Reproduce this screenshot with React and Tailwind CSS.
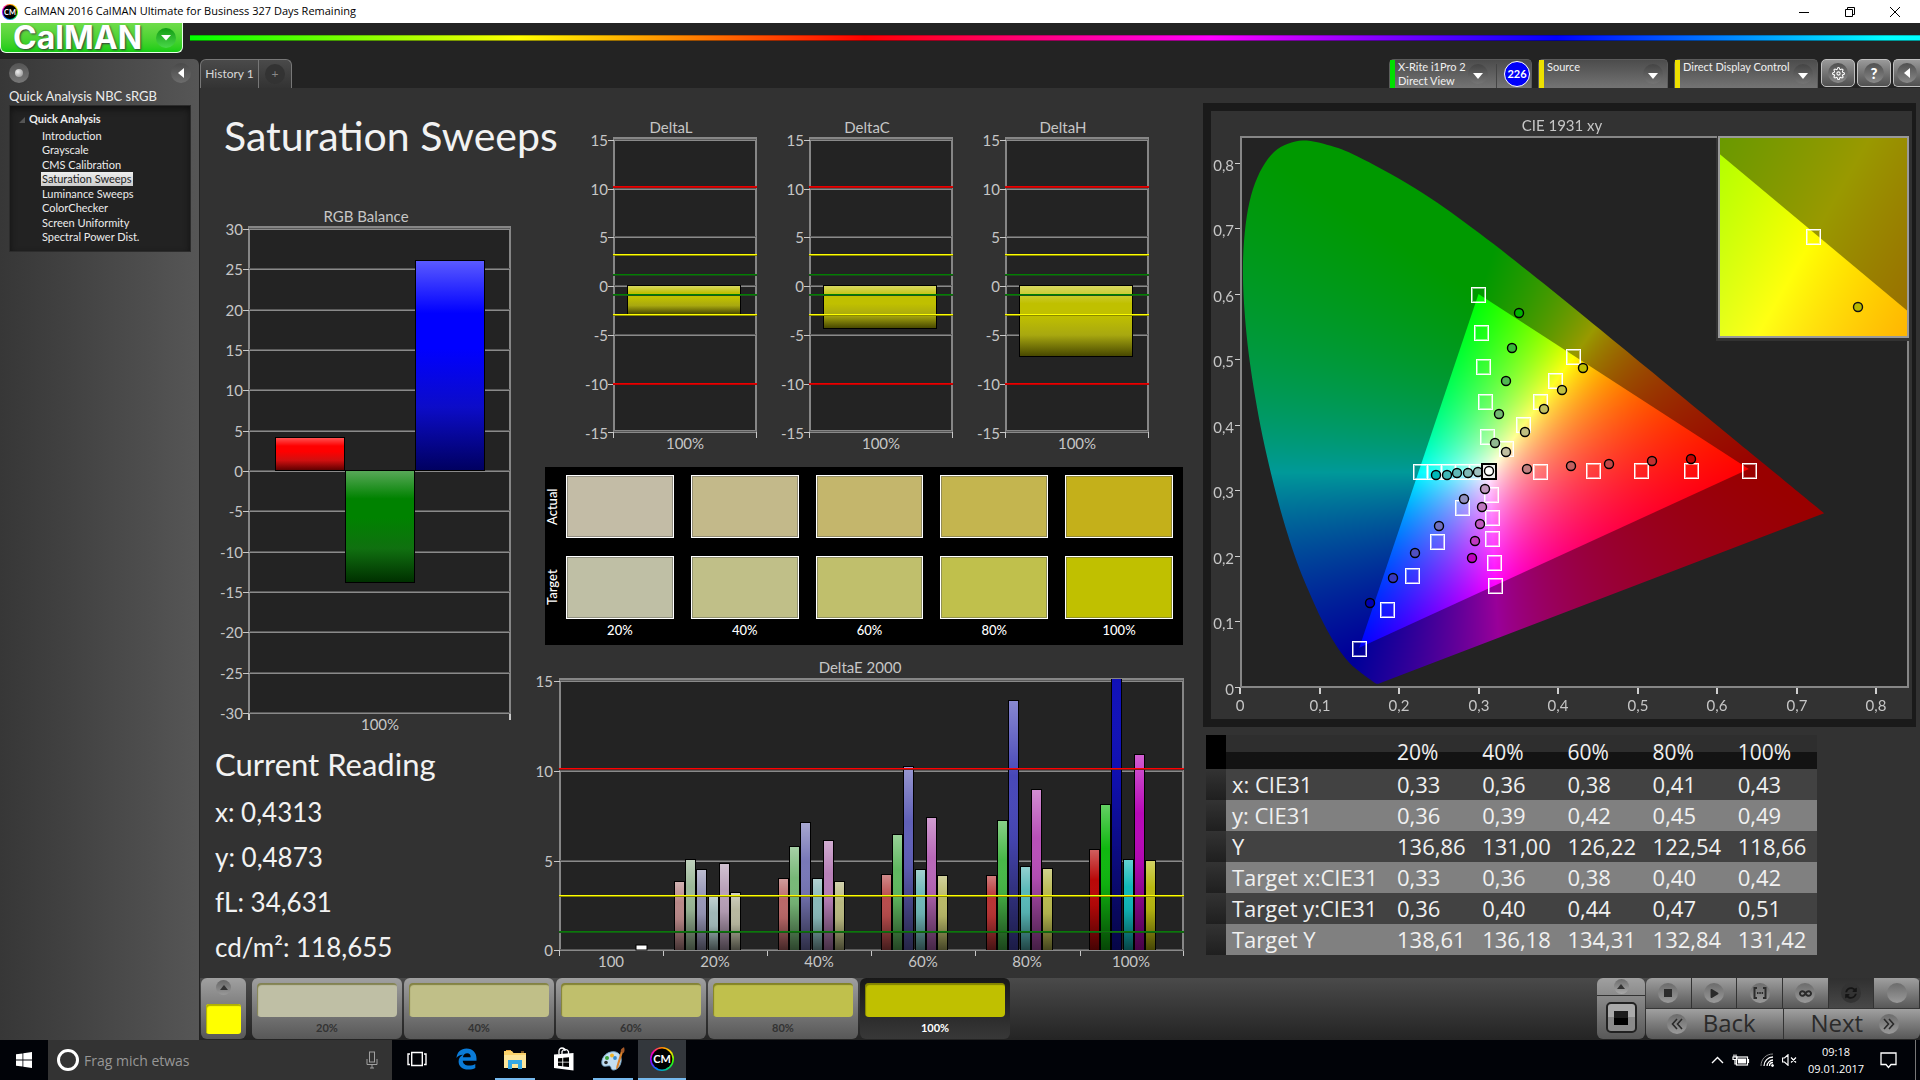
import React, { useLayoutEffect, useRef } from "react";
import {
  FaPlay,
  FaInfinity,
  FaSyncAlt,
} from "react-icons/fa";
import { FiSettings } from "react-icons/fi";

const LATO = "font-[Lato,'Open_Sans',sans-serif]";
const OPEN = "font-['Open_Sans','Noto_Sans',sans-serif]";

/* ---------- shared chart parts ---------- */

function BarFill({ id, color }) {
  return (
    <linearGradient id={id} x1="0" y1="0" x2="0" y2="1">
      <stop offset="0" stopColor={color.light} />
      <stop offset="0.25" stopColor={color.main} />
      <stop offset="0.42" stopColor={color.main} />
      <stop offset="0.7" stopColor={color.soft} />
      <stop offset="1" stopColor={color.dark} />
    </linearGradient>
  );
}

function Bar({ x, y, w, h, fill }) {
  return (
    <g shapeRendering="crispEdges">
      <rect x={x - 1} y={y - 1} width={w + 2} height={h + 2} fill="#000" />
      <rect x={x} y={y} width={w} height={h} fill={fill} />
    </g>
  );
}

function GridLine({ x1, x2, y }) {
  return (
    <g shapeRendering="crispEdges">
      <rect x={x1} y={y - 1} width={x2 - x1} height="1" fill="#5a5a5a" />
      <rect x={x1} y={y} width={x2 - x1} height="1" fill="#8a8a8a" />
      <rect x={x1 - 6} y={y} width="6" height="1" fill="#c8c8c8" />
    </g>
  );
}

function Level({ x1, x2, y, color, dim }) {
  return (
    <g shapeRendering="crispEdges">
      <rect x={x1} y={y - 1} width={x2 - x1} height="1" fill={color} />
      <rect x={x1} y={y} width={x2 - x1} height="1" fill={dim} />
    </g>
  );
}

const SVG_TEXT = "fill-[#c6c6c6] text-[15px]";

/* ---------- RGB balance ---------- */

const RGB_TICKS = [30, 25, 20, 15, 10, 5, 0, -5, -10, -15, -20, -25, -30];

function RgbBalance() {
  const yOf = (v) => Math.round(269 - v * 8.07);
  return (
    <svg viewBox="0 0 330 528" className={`block h-auto w-full ${LATO}`}>
      <defs>
        <BarFill id="rgbR" color={{ light: "#ff5050", main: "#ff0000", soft: "#d01010", dark: "#600000" }} />
        <BarFill id="rgbG" color={{ light: "#58a858", main: "#008200", soft: "#107010", dark: "#003000" }} />
        <BarFill id="rgbB" color={{ light: "#5a5aff", main: "#0000ff", soft: "#0c0cc8", dark: "#000060" }} />
      </defs>
      <text x="166" y="20" textAnchor="middle" className={SVG_TEXT}>RGB Balance</text>
      <rect x="49" y="25" width="261" height="486" fill="#232323" stroke="#868686" strokeWidth="2" />
      {RGB_TICKS.map((v) => (
        <g key={v}>
          <GridLine x1={49} x2={310} y={yOf(v)} />
          <text x="43" y={yOf(v) + 6} textAnchor="end" className={SVG_TEXT}>{v}</text>
        </g>
      ))}
      <Bar x={76} y={236} w={68} h={32} fill="url(#rgbR)" />
      <Bar x={146} y={269} w={68} h={111} fill="url(#rgbG)" />
      <Bar x={216} y={59} w={68} h={209} fill="url(#rgbB)" />
      <rect x="48" y="512" width="2" height="6" fill="#c8c8c8" />
      <rect x="309" y="512" width="2" height="6" fill="#c8c8c8" />
      <text x="180" y="528" textAnchor="middle" className={SVG_TEXT}>100%</text>
    </svg>
  );
}

/* ---------- DeltaL / C / H ---------- */

const DELTA_TICKS = [15, 10, 5, 0, -5, -10, -15];

function DeltaChart({ name, bottom }) {
  const yOf = (v) => Math.round(174 - v * 9.75);
  return (
    <svg viewBox="0 0 196 350" className={`block h-auto w-full ${LATO}`}>
      <defs>
        <BarFill id={name} color={{ light: "#d8d860", main: "#c0c000", soft: "#a8a810", dark: "#484800" }} />
      </defs>
      <text x="96" y="21" textAnchor="middle" className={SVG_TEXT}>{name}</text>
      <rect x="39" y="26" width="142" height="293" fill="#232323" stroke="#868686" strokeWidth="2" />
      {DELTA_TICKS.map((v) => (
        <g key={v}>
          <GridLine x1={39} x2={181} y={yOf(v)} />
          <text x="33" y={yOf(v) + (v < -10 ? 7 : 6)} textAnchor="end" className={SVG_TEXT}>{v}</text>
        </g>
      ))}
      <Bar x={53} y={174} w={112} h={bottom - 174} fill={`url(#${name})`} />
      <Level x1={38} x2={182} y={75} color="#e80000" dim="#c00000" />
      <Level x1={38} x2={182} y={143} color="#ffff00" dim="#8a8a00" />
      <Level x1={38} x2={182} y={163} color="#008000" dim="#1d481d" />
      <Level x1={38} x2={182} y={183} color="#008000" dim="#1d581d" />
      <Level x1={38} x2={182} y={203} color="#ffff00" dim="#8a8a00" />
      <Level x1={38} x2={182} y={272} color="#e80000" dim="#c00000" />
      <rect x="38" y="320" width="1" height="6" fill="#c8c8c8" />
      <rect x="181" y="320" width="1" height="6" fill="#c8c8c8" />
      <text x="110" y="337" textAnchor="middle" className={SVG_TEXT}>100%</text>
    </svg>
  );
}

/* ---------- actual / target patches ---------- */

const PATCHES = [
  ["20%", "bg-[#c3bca6]", "bg-[#bfbfa5]"],
  ["40%", "bg-[#c3b98a]", "bg-[#c0bf88]"],
  ["60%", "bg-[#c4b66c]", "bg-[#c0bf6c]"],
  ["80%", "bg-[#c4b54f]", "bg-[#c0c04c]"],
  ["100%", "bg-[#c4b01a]", "bg-[#c0c000]"],
];

function PatchPanel() {
  return (
    <div className={`ml-[15px] mr-[17px] mt-[5px] flex h-[178px] bg-black pt-2 pr-2.5 text-[13px] font-medium text-white ${LATO}`}>
      <div className="flex w-[21px] flex-col gap-[18px]">
        <span className="flex h-[63px] w-4 rotate-180 items-center justify-center [writing-mode:vertical-rl]">Actual</span>
        <span className="flex h-[63px] w-4 rotate-180 items-center justify-center [writing-mode:vertical-rl]">Target</span>
      </div>
      <div className="grid flex-1 grid-cols-5 gap-x-[17px]">
        {PATCHES.map(([label, actual, target]) => (
          <div key={label} className="flex flex-col">
            <div className={`h-[63px] border border-white shadow-[inset_0_0_0_1px_rgba(90,90,90,0.45)] ${actual}`} />
            <div className={`mt-[18px] h-[63px] border border-white shadow-[inset_0_0_0_1px_rgba(90,90,90,0.45)] ${target}`} />
            <span className="mt-0.5 text-center leading-[18px]">{label}</span>
          </div>
        ))}
      </div>
    </div>
  );
}

/* ---------- DeltaE 2000 ---------- */

const DE_SERIES = [
  { label: "20%", x: 144, tops: [231, 209, 219, 246, 213, 242], colors: ["#b88888", "#9cb898", "#9898b8", "#a0b8b8", "#b8a0b8", "#b8b8a0"] },
  { label: "40%", x: 248, tops: [228, 196, 172, 228, 190, 231], colors: ["#b86868", "#78b878", "#7878b8", "#88b8b8", "#b880b8", "#b8b880"] },
  { label: "60%", x: 351, tops: [224, 184, 116, 219, 167, 225], colors: ["#b84c4c", "#60b860", "#6060b8", "#70b8b8", "#b868b8", "#b8b868"] },
  { label: "80%", x: 456, tops: [225, 170, 50, 216, 139, 218], colors: ["#b83434", "#48b848", "#4848b8", "#58b8b8", "#b850b8", "#b8b850"] },
  { label: "100%", x: 559, tops: [199, 154, -90, 209, 104, 210], colors: ["#b80808", "#10b810", "#1010b8", "#10b8b8", "#b808b8", "#b8b810"] },
];

function DeltaE() {
  return (
    <svg viewBox="0 0 670 325" className={`mt-[5px] block h-auto w-full ${LATO}`}>
      <defs>
        <linearGradient id="gloss" x1="0" y1="0" x2="0" y2="1">
          <stop offset="0" stopColor="#fff" stopOpacity="0.35" />
          <stop offset="0.3" stopColor="#fff" stopOpacity="0" />
          <stop offset="0.55" stopColor="#000" stopOpacity="0.05" />
          <stop offset="1" stopColor="#000" stopOpacity="0.62" />
        </linearGradient>
        <clipPath id="dePlot">
          <rect x="29" y="29" width="625" height="272" />
        </clipPath>
      </defs>
      <text x="330" y="23" textAnchor="middle" className={SVG_TEXT}>DeltaE 2000</text>
      <rect x="30" y="29" width="623" height="271" fill="#232323" stroke="#868686" strokeWidth="2" />
      {[[15, 31], [10, 121], [5, 211], [0, 300]].map(([v, y]) => (
        <g key={v}>
          <GridLine x1={30} x2={653} y={y} />
          <text x="23" y={y + 6} textAnchor="end" className={SVG_TEXT}>{v}</text>
        </g>
      ))}
      <rect x="106" y="295" width="11" height="5" fill="#fff" stroke="#000" />
      <g clipPath="url(#dePlot)">
        {DE_SERIES.map((s) =>
          s.tops.map((top, i) => (
            <g key={s.label + i} shapeRendering="crispEdges">
              <rect x={s.x + Math.round(i * 11.2)} y={top} width="11" height={300 - top} fill="#000" />
              <rect x={s.x + Math.round(i * 11.2) + 1} y={top + 1} width="9" height={299 - top} fill={s.colors[i]} />
              <rect x={s.x + Math.round(i * 11.2) + 1} y={top + 1} width="9" height={299 - top} fill="url(#gloss)" />
            </g>
          ))
        )}
      </g>
      <Level x1={29} x2={654} y={119} color="#ff0000" dim="#801818" />
      <Level x1={29} x2={654} y={246} color="#ffff00" dim="#8a8a00" />
      <Level x1={29} x2={654} y={282} color="#0a780a" dim="#145c14" />
      {[29, 133, 237, 341, 445, 550, 653].map((x) => (
        <rect key={x} x={x} y="301" width="1" height="5" fill="#c8c8c8" />
      ))}
      {["100", "20%", "40%", "60%", "80%", "100%"].map((t, i) => (
        <text key={t} x={81 + i * 104} y="317" textAnchor="middle" className={SVG_TEXT}>{t}</text>
      ))}
    </svg>
  );
}

/* ---------- CIE 1931 diagram ---------- */

const LOCUS = [
  [0.1741, 0.005], [0.1714, 0.0051], [0.1689, 0.0069], [0.1644, 0.0109], [0.1566, 0.0177], [0.144, 0.0297],
  [0.1355, 0.0399], [0.1241, 0.0578], [0.1096, 0.0868], [0.0913, 0.1327], [0.0687, 0.2007], [0.0454, 0.295],
  [0.0235, 0.4127], [0.0082, 0.5384], [0.0039, 0.6548], [0.0139, 0.7502], [0.0389, 0.812], [0.0743, 0.8338],
  [0.1142, 0.8262], [0.1547, 0.8059], [0.2296, 0.7543], [0.3016, 0.6923], [0.3731, 0.6245], [0.4441, 0.5547],
  [0.5125, 0.4866], [0.5752, 0.4242], [0.627, 0.3725], [0.6658, 0.334], [0.6915, 0.3083], [0.719, 0.2809],
  [0.7347, 0.2653],
];
const GAMUT = [[0.64, 0.333], [0.3, 0.6], [0.15, 0.06]];

function smooth(points) {
  const out = [];
  for (let i = 0; i < points.length - 1; i++) {
    const p0 = points[Math.max(0, i - 1)];
    const p1 = points[i];
    const p2 = points[i + 1];
    const p3 = points[Math.min(points.length - 1, i + 2)];
    for (let s = 0; s < 8; s++) {
      const t = s / 8;
      out.push([0, 1].map((k) =>
        0.5 * (2 * p1[k] + (p2[k] - p0[k]) * t + (2 * p0[k] - 5 * p1[k] + 4 * p2[k] - p3[k]) * t * t +
          (3 * p1[k] - p0[k] - 3 * p2[k] + p3[k]) * t * t * t)
      ));
    }
  }
  out.push(points[points.length - 1]);
  return out;
}

function colorAt(x, y) {
  const yy = Math.max(y, 0.001);
  const X = x / yy;
  const Z = (1 - x - yy) / yy;
  const r = Math.max(0, 3.2406 * X - 1.5372 - 0.4986 * Z);
  const g = Math.max(0, -0.9689 * X + 1.8758 + 0.0415 * Z);
  const b = Math.max(0, 0.0557 * X - 0.204 + 1.057 * Z);
  const m = Math.max(r, g, b, 0.0001);
  return [(r / m) * 255, (g / m) * 255, (b / m) * 255];
}

function paintField(ctx, box, toXY, toPx, outline) {
  const layer = (gain) => {
    const c = document.createElement("canvas");
    c.width = box.w;
    c.height = box.h;
    const cx = c.getContext("2d");
    const img = cx.createImageData(box.w, box.h);
    for (let j = 0; j < box.h; j++) {
      for (let i = 0; i < box.w; i++) {
        const [x, y] = toXY(i, j);
        const rgb = colorAt(x, y);
        const o = (j * box.w + i) * 4;
        img.data[o] = rgb[0] * gain;
        img.data[o + 1] = rgb[1] * gain;
        img.data[o + 2] = rgb[2] * gain;
        img.data[o + 3] = 255;
      }
    }
    cx.putImageData(img, 0, 0);
    return c;
  };
  const clipTo = (pts) => {
    ctx.beginPath();
    pts.forEach((p, i) => {
      const [px, py] = toPx(p[0], p[1]);
      if (i) ctx.lineTo(box.x + px, box.y + py);
      else ctx.moveTo(box.x + px, box.y + py);
    });
    ctx.closePath();
    ctx.clip();
  };
  ctx.save();
  ctx.beginPath();
  ctx.rect(box.x, box.y, box.w, box.h);
  ctx.clip();
  ctx.save();
  if (outline) clipTo(outline);
  ctx.drawImage(layer(0.6), box.x, box.y);
  ctx.restore();
  clipTo(GAMUT);
  ctx.drawImage(layer(1), box.x, box.y);
  ctx.restore();
}

const TARGETS = [
  [509, 334], [451, 334], [401, 334], [353, 334], [300, 335],
  [238, 158], [241, 196], [243, 230], [245, 265], [247, 300],
  [333, 220], [315, 244], [300, 265], [283, 288], [266, 312],
  [180, 335], [194, 335], [208, 335], [222, 335], [236, 335],
  [251, 358], [252, 381], [252, 402], [254, 426], [255, 449],
  [222, 371], [197, 405], [172, 439], [147, 473], [119, 512],
];
const READINGS = [
  [287, 333, "#c08080"], [331, 330, "#c06060"], [369, 328, "#c04848"], [412, 325, "#c03030"], [451, 323, "#c00000"],
  [255, 307, "#90b890"], [259, 278, "#70b870"], [266, 245, "#50b850"], [272, 212, "#38b838"], [279, 177, "#00b400"],
  [266, 316, "#c0bfa0"], [285, 296, "#c0bf80"], [304, 273, "#c0bf60"], [322, 254, "#c0c040"], [343, 232, "#c0c000"],
  [238, 336, "#a0c0c0"], [228, 337, "#80b8b8"], [217, 337, "#60b8b8"], [207, 339, "#40b8b8"], [196, 339, "#00b8b8"],
  [245, 353, "#c098c0"], [242, 371, "#c078c0"], [240, 388, "#c058c0"], [235, 405, "#c038c0"], [232, 422, "#c000c0"],
  [224, 363, "#9090c0"], [199, 390, "#7070c0"], [175, 417, "#5050c0"], [153, 442, "#3838c0"], [130, 467, "#0000b0"],
];

function TargetBox({ x, y }) {
  return (
    <g fill="none" shapeRendering="crispEdges">
      <rect x={x - 7} y={y - 7} width="14" height="15" stroke="#fff" />
      <rect x={x - 6} y={y - 6} width="12" height="13" stroke="#fff" strokeOpacity="0.5" />
    </g>
  );
}

function CieChart() {
  const ref = useRef(null);
  useLayoutEffect(() => {
    const ctx = ref.current.getContext("2d");
    ctx.clearRect(0, 0, 701, 608);
    ctx.fillStyle = "#232323";
    ctx.fillRect(29, 25, 668, 551);
    paintField(
      ctx,
      { x: 29, y: 25, w: 668, h: 551 },
      (i, j) => [i / 795, (551 - j) / 655],
      (x, y) => [x * 795, 551 - y * 655],
      smooth(LOCUS)
    );
    ctx.fillStyle = "#323232";
    ctx.fillRect(505, 22, 194, 208);
    paintField(
      ctx,
      { x: 508, y: 26, w: 188, h: 200 },
      (i, j) => [0.4193 + (i - 94) / 3700, 0.5053 - (j - 99) / 3930],
      (x, y) => [94 + (x - 0.4193) * 3700, 99 - (y - 0.5053) * 3930],
      null
    );
  }, []);
  return (
    <section className="mr-1 ml-[3px] mt-[15px] border-8 border-r-4 border-[#1a1a1a] bg-[#323232]">
      <div className="relative">
        <canvas ref={ref} width="701" height="608" className="block h-auto w-full" />
        <svg viewBox="0 0 701 608" className={`absolute inset-0 h-full w-full ${LATO}`}>
          <text x="351" y="20" textAnchor="middle" className={SVG_TEXT}>CIE 1931 xy</text>
          <path d="M506 26H30V576H697V230" fill="none" stroke="#868686" strokeWidth="2" />
          {[0, 1, 2, 3, 4, 5, 6, 7, 8].map((n) => {
            const label = n ? `0,${n}` : "0";
            return (
              <g key={n}>
                <rect x={28 + Math.round(n * 79.5)} y="577" width="2" height="6" fill="#d0d0d0" />
                <text x={29 + Math.round(n * 79.5)} y="600" textAnchor="middle" className={SVG_TEXT}>{label}</text>
                <rect x="24" y={576 - Math.round(n * 65.5)} width="5" height="1" fill="#d0d0d0" />
                <text x="23" y={584 - Math.round(n * 65.5)} textAnchor="end" className={SVG_TEXT}>{label}</text>
              </g>
            );
          })}
          <g transform="translate(29 25)">
            {TARGETS.map(([x, y]) => (
              <TargetBox key={`${x}-${y}`} x={x} y={y} />
            ))}
            {READINGS.map(([x, y, c]) => (
              <circle key={`${x}-${y}`} cx={x} cy={y} r="4.5" fill={c} stroke="#000" strokeWidth="1.4" />
            ))}
            <rect x="242" y="328" width="14" height="15" fill="#f0f0f0" stroke="#000" strokeWidth="2" />
            <circle cx="249" cy="335" r="4.5" fill="#fff" stroke="#000" strokeWidth="1.4" />
          </g>
          <rect x="508" y="26" width="189" height="200" fill="none" stroke="#999" strokeWidth="2" />
          <TargetBox x={602} y={125} />
          <circle cx="647" cy="196" r="4.5" fill="#b8b800" stroke="#111" strokeWidth="1.4" />
        </svg>
      </div>
    </section>
  );
}

/* ---------- readings table ---------- */

const COLS = ["20%", "40%", "60%", "80%", "100%"];
const ROWS = [
  ["x: CIE31", "0,33", "0,36", "0,38", "0,41", "0,43"],
  ["y: CIE31", "0,36", "0,39", "0,42", "0,45", "0,49"],
  ["Y", "136,86", "131,00", "126,22", "122,54", "118,66"],
  ["Target x:CIE31", "0,33", "0,36", "0,38", "0,40", "0,42"],
  ["Target y:CIE31", "0,36", "0,40", "0,44", "0,47", "0,51"],
  ["Target Y", "138,61", "136,18", "134,31", "132,84", "131,42"],
];

function ReadingsTable() {
  return (
    <table className={`mt-2 ml-1.5 w-[611px] table-fixed border-collapse text-left text-[22px] leading-[28px] text-[#f0f0f0] ${OPEN}`}>
      <colgroup>
        <col className="w-5" />
        <col className="w-[165px]" />
      </colgroup>
      <thead>
        <tr className="h-[34px] bg-linear-to-b from-[#2e2e2e] from-50% to-[#131313] to-50%">
          <th className="bg-black" />
          <th />
          {COLS.map((c) => (
            <th key={c} scope="col" className="pl-1.5 text-[21px] font-normal">{c}</th>
          ))}
        </tr>
      </thead>
      <tbody>
        {ROWS.map(([name, ...vals]) => (
          <tr key={name} className="h-[31px] odd:bg-[#424242] even:bg-[#808080]">
            <td className="bg-linear-to-b from-[#333] to-[#1f1f1f]" />
            <th scope="row" className="pb-0.5 pl-1.5 font-normal whitespace-nowrap">{name}</th>
            {vals.map((v, i) => (
              <td key={i} className="pb-0.5 pl-1.5">{v}</td>
            ))}
          </tr>
        ))}
      </tbody>
    </table>
  );
}

/* ---------- header ---------- */

function CmIcon({ className }) {
  return (
    <span className={`flex items-center justify-center rounded-full bg-[conic-gradient(#f80,#fd0,#3f0,#0c8,#08f,#80f,#f0a,#f80)] ${className}`}>
      <svg viewBox="0 0 24 24" className="h-full w-full font-[Lato,sans-serif]">
        <circle cx="12" cy="12" r="10.4" fill="#000" />
        <text x="12" y="16" textAnchor="middle" fontSize="11" fontWeight="700" fill="#fff">CM</text>
      </svg>
    </span>
  );
}

function TitleBar() {
  return (
    <div className={`flex h-[23px] items-center bg-white pr-0.5 pl-0.5 text-black ${OPEN}`}>
      <CmIcon className="size-4" />
      <span className="ml-1.5 text-[11px]">CalMAN 2016 CalMAN Ultimate for Business 327 Days Remaining</span>
      <div className="ml-auto flex">
        <button aria-label="Minimize" className="flex h-[23px] w-[46px] items-center justify-center">
          <svg width="10" height="10" viewBox="0 0 10 10"><path d="M0 5.5h10" stroke="#000" /></svg>
        </button>
        <button aria-label="Restore" className="flex h-[23px] w-[45px] items-center justify-center">
          <svg width="10" height="10" viewBox="0 0 10 10" fill="none" stroke="#000"><path d="M.5 2.5h7v7h-7zM2.5 2.5v-2h7v7h-2" /></svg>
        </button>
        <button aria-label="Close" className="flex h-[23px] w-[46px] items-center justify-center">
          <svg width="10" height="10" viewBox="0 0 10 10"><path d="M0 0l10 10M10 0L0 10" stroke="#000" /></svg>
        </button>
      </div>
    </div>
  );
}

function BrandBar() {
  return (
    <div className="flex h-9 items-start bg-[#232323]">
      <button className="flex h-[30px] w-[183px] items-center rounded-b-md border border-t-0 border-[#e8ffe8] bg-linear-to-b from-[#6fdc4a] to-[#12cc12] pl-3 text-white">
        <span className="font-[Inter,Lato,sans-serif] text-[32px] leading-[28px] font-bold [text-shadow:1px_1px_2px_#3a3a3a]">CalMAN</span>
        <span className="mr-1.5 ml-auto flex size-5 shrink-0 items-center justify-center rounded-full bg-linear-to-b from-[#0c9c10] to-[#48d848]">
          <svg width="10" height="6" viewBox="0 0 10 6"><path d="M0 0h10L5 5.5z" fill="#fff" /></svg>
        </span>
      </button>
      <div className="mt-3 ml-[7px] h-1.5 flex-1 bg-[linear-gradient(90deg,#0f0_0%,#ff0_19%,#f00_39%,#f0f_59%,#00f_79%,#0ff_98%)] shadow-[inset_0_-1px_0_rgba(0,0,0,0.4),inset_0_1px_0_rgba(0,0,0,0.25)]" />
    </div>
  );
}

/* ---------- sidebar ---------- */

const TREE = ["Introduction", "Grayscale", "CMS Calibration", "Saturation Sweeps", "Luminance Sweeps", "ColorChecker", "Screen Uniformity", "Spectral Power Dist."];

function Sidebar() {
  return (
    <nav className={`flex w-[200px] shrink-0 flex-col rounded-tr-md border-r border-[#222] bg-linear-to-r from-[#373737] to-[#565656] text-[#ececec] ${LATO}`}>
      <div className="flex h-7 items-center justify-between pr-2 pl-[9px]">
        <button aria-label="Record" className="flex size-5 items-center justify-center rounded-full bg-linear-to-b from-[#555] to-[#777]">
          <span className="size-2 rounded-full bg-[radial-gradient(circle_at_35%_35%,#eee,#888)]" />
        </button>
        <button aria-label="Collapse panel" className="flex size-5 items-center justify-center rounded-full bg-linear-to-b from-[#4a4a4a] to-[#6c6c6c]">
          <svg width="6" height="10" viewBox="0 0 6 10"><path d="M6 0v10L0 5z" fill="#fff" /></svg>
        </button>
      </div>
      <h2 className="h-[18px] pl-[9px] text-[13px] leading-[19px] whitespace-nowrap">Quick Analysis NBC sRGB</h2>
      <div className="mr-2 ml-[9px] h-[147px] border border-[#2c2c2c] bg-[#222] pt-[5px] shadow-[inset_0_3px_6px_#111]">
        <div className="flex h-[17px] items-center pl-[9px] text-[11px] font-bold">
          <svg width="6" height="6" viewBox="0 0 6 6" className="mr-1"><path d="M6 0v6H0z" fill="#555" /></svg>
          Quick Analysis
        </div>
        <ul className="text-[11px]">
          {TREE.map((t) => (
            <li key={t} className="flex h-[15px] items-center pl-8 nth-[2n]:h-[14px]">
              <a
                href="#view"
                className={t === "Saturation Sweeps" ? "-ml-px bg-linear-to-b from-[#eee] to-[#ccc] px-px leading-[14px] text-[#222]" : "leading-[14px]"}
              >
                {t}
              </a>
            </li>
          ))}
        </ul>
      </div>
    </nav>
  );
}

/* ---------- tab row ---------- */

function DownKnob() {
  return (
    <span className="flex size-5 shrink-0 items-center justify-center rounded-full bg-linear-to-b from-[#444] to-[#757575]">
      <svg width="10" height="6" viewBox="0 0 10 6" className="mt-1"><path d="M0 0h10L5 6z" fill="#fff" /></svg>
    </span>
  );
}

const METER = "flex h-[29px] rounded-t-[5px] border border-b-0 border-[#5c5c5c] bg-linear-to-b from-[#4c4c4c] to-[#747474] text-left text-[11px] leading-[14px] text-[#f0f0f0]";
const TOOL = "flex h-7 items-center justify-center rounded-[5px] border border-[#c0c0c0] bg-linear-to-b from-[#9a9a9a] to-[#505050]";
const KNOB = "flex size-5 shrink-0 items-center justify-center rounded-full bg-linear-to-b from-[#505050] to-[#8a8a8a] text-white";

function TabRow() {
  return (
    <div className={`flex h-[29px] bg-[#232323] ${LATO}`}>
      <div className="flex rounded-t-md border border-b-0 border-[#777] bg-linear-to-b from-[#4a4a4a] to-[#333] text-[#d8d8d8]">
        <button className="w-[58px] border-r border-[#777] text-[12px] whitespace-nowrap">History 1</button>
        <button aria-label="Add history" className="flex w-8 items-center justify-center">
          <span className="flex size-5 items-center justify-center rounded-full bg-[#333] text-[12px] text-[#888]">+</span>
        </button>
      </div>
      <div className="ml-auto flex shrink-0 overflow-hidden">
        <button className={`${METER} w-[143px]`}>
          <span className="mr-[3px] w-[5px] shrink-0 self-stretch bg-[#00e000]" />
          <span className="w-[70px] shrink-0 whitespace-nowrap">X-Rite i1Pro 2<br />Direct View</span>
          <span className="mt-1"><DownKnob /></span>
          <span className="mt-1 ml-2 self-stretch border-l border-[#444]" />
          <span className="mt-px ml-[7px] flex size-[26px] shrink-0 items-center justify-center rounded-full border border-white bg-[#0000f8] text-[11px] font-bold text-white">226</span>
        </button>
        <button className={`${METER} ml-1.5 w-[130px] pr-1`}>
          <span className="mr-[3px] w-[5px] shrink-0 self-stretch bg-[#eee000]" />
          <span>Source</span>
          <span className="mt-1 ml-auto"><DownKnob /></span>
        </button>
        <button className={`${METER} ml-1.5 w-[144px] pr-1`}>
          <span className="mr-[3px] w-[5px] shrink-0 self-stretch bg-[#eee000]" />
          <span className="whitespace-nowrap">Direct Display Control</span>
          <span className="mt-1 ml-auto"><DownKnob /></span>
        </button>
        <button aria-label="Settings" className={`${TOOL} ml-[3px] w-[34px]`}>
          <span className={KNOB}><FiSettings size={13} /></span>
        </button>
        <button aria-label="Help" className={`${TOOL} ml-0.5 w-[34px]`}>
          <span className={`${KNOB} text-[15px] font-black`}>?</span>
        </button>
        <button aria-label="Collapse toolbar" className={`${TOOL} ml-0.5 w-[27px] rounded-r-none border-r-0`}>
          <span className={KNOB}><svg width="6" height="10" viewBox="0 0 6 10"><path d="M6 0v10L0 5z" fill="#fff" /></svg></span>
        </button>
      </div>
    </div>
  );
}

/* ---------- bottom strip ---------- */

const SWATCHES = [
  ["20%", "bg-[#bfbfa5]"],
  ["40%", "bg-[#c0bf88]"],
  ["60%", "bg-[#c0bf6c]"],
  ["80%", "bg-[#c0c04c]"],
  ["100%", "bg-[#c0c000]"],
];
const STRIP = "bg-linear-to-b from-[#a0a0a0] to-[#585858]";

function Disc({ children }) {
  return (
    <span className="flex size-5 items-center justify-center rounded-full bg-linear-to-b from-[#6c6c6c] to-[#9a9a9a] text-[#2a2a2a]">{children}</span>
  );
}

function Chevrons({ flip }) {
  return (
    <svg width="12" height="12" viewBox="0 0 12 12" fill="none" stroke="#2a2a2a" strokeWidth="1.6" className={flip ? "rotate-180" : ""}>
      <path d="M6 1L1.500 6L6 11M11 1L6.500 6L11 11" />
    </svg>
  );
}

function BottomStrip() {
  const cell = `flex h-[30px] flex-1 items-center justify-center border-r border-[#333] ${STRIP}`;
  return (
    <div className={`flex h-[62px] bg-linear-to-b from-[#4a4a4a] to-[#242424] pb-px pl-px ${LATO}`}>
      <button aria-label="Current colour" className={`flex w-[45px] flex-col items-center rounded-md pt-0.5 ${STRIP}`}>
        <span className="flex h-[15px] w-[15px] items-center justify-center rounded-full bg-linear-to-b from-[#666] to-[#999]">
          <svg width="8" height="5" viewBox="0 0 8 5"><path d="M0 5h8L4 0z" fill="#333" /></svg>
        </span>
        <span className="mt-[9px] h-[30px] w-[35px] rounded-[3px] bg-[#ffff00] shadow-[inset_1px_2px_1px_#b0b000]" />
      </button>
      <div className="ml-1.5 flex gap-0.5">
        {SWATCHES.map(([label, bg]) => {
          const on = label === "100%";
          return (
            <button
              key={label}
              className={`flex w-[150px] flex-col items-center rounded-md pt-[5px] text-[11px] leading-[22px] font-bold ${on ? "bg-linear-to-b from-[#181818] to-[#383838] text-white" : `text-[#333] ${STRIP}`}`}
            >
              <span className={`h-9 w-[140px] rounded-[4px] shadow-[inset_1px_2px_1px_rgba(70,70,0,0.5)] ${bg}`} />
              {label}
            </button>
          );
        })}
      </div>
      <div className={`ml-auto flex w-12 flex-col items-center rounded-md ${STRIP}`}>
        <button aria-label="Expand" className="flex h-[18px] w-full items-center justify-center border-b border-[#333]">
          <span className="flex size-[15px] items-center justify-center rounded-full bg-linear-to-b from-[#6c6c6c] to-[#aaa]">
            <svg width="8" height="5" viewBox="0 0 8 5"><path d="M0 5h8L4 0z" fill="#333" /></svg>
          </span>
        </button>
        <button aria-label="Stop" className="mt-1.5 flex size-[31px] items-center justify-center rounded-[5px] border-2 border-[#222] bg-linear-to-b from-[#aaa] from-50% to-[#8a8a8a] to-50%">
          <span className="size-3.5 border-b-[7px] border-b-black bg-[#1c1c1c]" />
        </button>
      </div>
      <div className="ml-px flex w-[274px] flex-col gap-px text-[#2a2a2a]">
        <div className="flex overflow-hidden rounded-t-md">
          <button aria-label="Stop reading" className={cell}><Disc><span className="size-2 bg-[#2c2c2c]" /></Disc></button>
          <button aria-label="Read" className={cell}><Disc><FaPlay size={9} /></Disc></button>
          <button aria-label="Read series" className={cell}>
            <Disc>
              <svg width="14" height="12" viewBox="0 0 14 12" fill="none" stroke="#2c2c2c" strokeWidth="2"><path d="M4 1H1.500V11H4M10 1H12.500V11H10M4 6h1.500M6.300 6h1.500M8.600 6h1.500" /></svg>
            </Disc>
          </button>
          <button aria-label="Read continuously" className={cell}><Disc><FaInfinity size={13} /></Disc></button>
          <button aria-label="Refresh" className="flex h-[30px] flex-1 items-center justify-center border-r border-[#333] bg-linear-to-b from-[#303030] to-[#484848]">
            <span className="flex size-5 items-center justify-center rounded-full bg-[#333] text-[#151515]"><FaSyncAlt size={12} /></span>
          </button>
          <button aria-label="Status" className={cell}><Disc /></button>
        </div>
        <div className={`flex overflow-hidden rounded-b-md text-[24px] font-medium ${OPEN}`}>
          <button className={`flex h-[30px] flex-1 items-center justify-center gap-4 border-r border-[#333] pr-1.5 leading-none ${STRIP}`}>
            <Disc><Chevrons /></Disc><span className="-mt-0.5">Back</span>
          </button>
          <button className={`flex h-[30px] flex-1 items-center justify-center gap-4 pl-1.5 leading-none ${STRIP}`}>
            <span className="-mt-0.5">Next</span><Disc><Chevrons flip /></Disc>
          </button>
        </div>
      </div>
    </div>
  );
}

/* ---------- taskbar ---------- */

function TaskButton({ label, line, active, children }) {
  return (
    <button aria-label={label} className={`ml-px flex h-10 w-12 flex-col items-center ${active ? "bg-[#33373c]" : ""}`}>
      <span className="flex h-[38px] items-center justify-center">{children}</span>
      {line && <span className={`h-0.5 bg-[#76b9ed] ${active ? "w-full" : "w-10"}`} />}
    </button>
  );
}

function Taskbar() {
  return (
    <footer className={`flex h-10 items-center bg-[#010308] text-white ${OPEN}`}>
      <button aria-label="Start" className="flex h-10 w-12 items-center justify-center">
        <svg width="16" height="16" viewBox="0 0 16 16" fill="#fff"><path d="M0 2.300L6.500 1.400V7.600H0zM7.300 1.300L16 0V7.600H7.300zM0 8.400H6.500V14.600L0 13.700zM7.300 8.400H16V16L7.300 14.700z" /></svg>
      </button>
      <label className="flex h-10 w-[344px] items-center bg-[#333] pl-[9px]">
        <span className="size-[22px] shrink-0 rounded-full border-[3px] border-white" />
        <input type="text" placeholder="Frag mich etwas" aria-label="Frag mich etwas" className="ml-[5px] w-full bg-transparent text-[14px] outline-none placeholder:text-[#979797]" />
        <svg width="12" height="18" viewBox="0 0 12 18" fill="none" stroke="#a0a0a0" className="mr-3.5 shrink-0"><rect x="3.500" y="1" width="5" height="10" /><path d="M1 8v5.500h10V8M6 13.500V17M4 17h4" /></svg>
      </label>
      <TaskButton label="Task view">
        <svg width="20" height="16" viewBox="0 0 20 16" fill="none" stroke="#fff" strokeWidth="1.400"><path d="M4.700 1.500h10.600v13H4.700zM3 3H1v10.500h2M17 3h2v10.500h-2" /></svg>
      </TaskButton>
      <TaskButton label="Edge">
        <svg width="21" height="22" viewBox="0 0 21 22"><path d="M0.500 10C1 4 5 0.500 10.500 0.500C17 0.500 20.500 5 20.500 10.500V12.800H6.800C7 16 9.500 17.600 13 17.600C15.500 17.600 17.600 17 19.300 16V20C17.500 21 15 21.600 12.300 21.600C6 21.600 2.600 18 2.600 13.500C2.600 10.500 4.200 8 7 6.800C3.800 6.900 1.700 8.400 0.500 10zM6.900 9.200H14.700C14.700 6.800 13.500 5.300 11.200 5.300C9 5.300 7.300 6.900 6.900 9.200z" fill="#0a7bd8" /></svg>
      </TaskButton>
      <TaskButton label="Explorer" line>
        <svg width="22" height="19" viewBox="0 0 22 19"><path d="M0 1h8l1.500 2H22v15H0z" fill="#fbd36b" /><path d="M0 5h22v13H0z" fill="#fde69a" /><path d="M4 10h14v9h-4v-5H8v5H4z" fill="#35a7e4" /><path d="M2 0h5v1H2zM17 1.500h3v1h-3z" fill="#e8a33a" /></svg>
      </TaskButton>
      <TaskButton label="Store">
        <svg width="22" height="24" viewBox="0 0 22 24"><path d="M6 7V4a3 3 0 0 1 6 0M9 7V4.500a3.500 3.500 0 0 1 6.500 0V7" fill="none" stroke="#fff" strokeWidth="1.300" /><path d="M1 7.500L20.500 6V23.500L1 21z" fill="#fff" /><path d="M5 11.300L9.300 10.900V14.700H5zM10.200 10.800L16 10.300V14.700H10.200zM5 15.500H9.300V19.300L5 18.800zM10.200 15.500H16V20L10.200 19.400z" fill="#000" /></svg>
      </TaskButton>
      <TaskButton label="Paint" line>
        <svg width="24" height="24" viewBox="0 0 24 24"><path d="M10 5C4 6 0 12 1 17C2 21 7 18 9 19C11 20 9 23 13 23C18 22 21 16 20 11C19 6 15 4 10 5z" fill="#c4dff2" stroke="#7faed0" /><circle cx="6" cy="11" r="2" fill="#3aa53a" /><circle cx="11" cy="8.500" r="2" fill="#f0b429" /><circle cx="5" cy="15.500" r="1.800" fill="#2b2b2b" /><circle cx="14" cy="11" r="1.900" fill="#38c" /><path d="M20 4L22 5L17 21L15 22L15.500 19z" fill="#d9822b" /><path d="M20 5C19 2 22 1 23 0C24 3 23.500 5 22.500 6z" fill="#a65a28" /></svg>
      </TaskButton>
      <TaskButton label="CalMAN" line active>
        <CmIcon className="size-6" />
      </TaskButton>
      <div className="ml-auto flex items-center">
        <svg width="13" height="8" viewBox="0 0 13 8" fill="none" stroke="#fff" strokeWidth="1.400"><path d="M1 7L6.500 1.500L12 7" /></svg>
        <svg width="18" height="12" viewBox="0 0 18 12" fill="none" stroke="#fff" strokeWidth="1.200" className="ml-2"><rect x="4.500" y="3" width="11" height="8" /><path d="M6.500 5h7v4h-7z" fill="#fff" /><path d="M16.500 5v4M1 3v2.500h4V3zM2 3V0.500M4 3V0.500M3 5.500V10h1" /></svg>
        <svg width="14" height="14" viewBox="0 0 14 14" fill="none" stroke="#fff" className="ml-2.5"><path d="M1 13C1 6 6 1 13 1" stroke="#888" /><path d="M4 13C4 8 8 4 13 4M7 13C7 10 10 7 13 7M9.500 13C9.500 11 11 9.500 13 9.500" strokeWidth="1.300" /><circle cx="12.500" cy="12.500" r="1" fill="#fff" /></svg>
        <svg width="15" height="12" viewBox="0 0 15 12" fill="none" stroke="#fff" className="ml-2"><path d="M0.500 4H2.500L6 0.800V11.200L2.500 8H0.500zM9 3.500l5 5M14 3.500l-5 5" strokeWidth="1.200" /></svg>
        <span className="ml-2.5 w-[58px] text-center text-[11px] leading-[17px]">09:18<br />09.01.2017</span>
        <button aria-label="Notifications" className="ml-3.5 flex h-10 w-[18px] items-center justify-center">
          <svg width="17" height="17" viewBox="0 0 17 17" fill="none" stroke="#fff" strokeWidth="1.300"><path d="M1 1h15v11.500H11L8.500 15.500L6 12.500H1z" /></svg>
        </button>
        <span className="mr-1 ml-[18px] h-10 w-px bg-[#777]" />
      </div>
    </footer>
  );
}

/* ---------- page ---------- */

export default function App() {
  return (
    <div className="flex min-h-screen flex-col bg-[#232323]">
      <TitleBar />
      <BrandBar />
      <div className="flex flex-1">
        <Sidebar />
        <div className="flex min-w-0 flex-1 flex-col">
          <TabRow />
          <main className={`grid flex-1 grid-cols-[330fr_670fr_720fr] bg-[#323232] text-[#f2f2f2] ${LATO}`}>
            <div className="min-w-0">
              <h1 className="mt-6 pl-6 text-[41px] leading-[48px] whitespace-nowrap">Saturation Sweeps</h1>
              <div className="mt-[42px]"><RgbBalance /></div>
              <div className="mt-4 pl-[15px] whitespace-nowrap">
                <h2 className="text-[31px] leading-9">Current Reading</h2>
                <div className="mt-2 text-[26px] leading-[45px]">
                  <p>x: 0,4313</p>
                  <p>y: 0,4873</p>
                  <p>fL: 34,631</p>
                  <p>cd/m²: 118,655</p>
                </div>
              </div>
            </div>
            <div className="min-w-0">
              <div className="mt-6 grid grid-cols-3 pr-[37px] pl-[45px]">
                <DeltaChart name="DeltaL" bottom={202} />
                <DeltaChart name="DeltaC" bottom={216} />
                <DeltaChart name="DeltaH" bottom={244} />
              </div>
              <PatchPanel />
              <DeltaE />
            </div>
            <div className="min-w-0">
              <CieChart />
              <ReadingsTable />
            </div>
          </main>
          <BottomStrip />
        </div>
      </div>
      <Taskbar />
    </div>
  );
}
